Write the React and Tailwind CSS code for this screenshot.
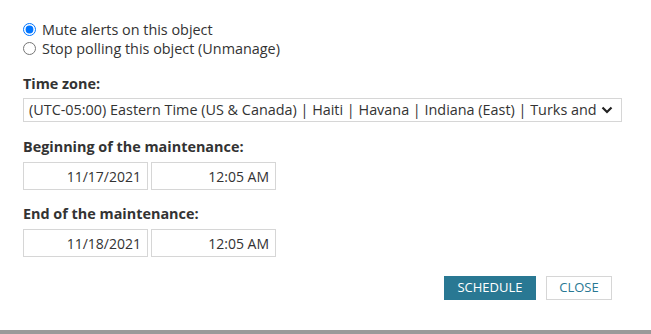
import React from "react";

const font = { fontFamily: '"Open Sans", "Liberation Sans", sans-serif' };

const Field = ({ value }) => (
    <div className="w-[125px] h-[28px] border border-[#d6d6d6] flex items-center justify-end pr-[6px] text-[14px] text-[#333]">
        {value}
    </div>
);

const Radio = ({ checked, label }) => (
    <label className="flex items-center h-[19px] leading-[19px] text-[14.4px] text-[#333]">
        <input type="radio" name="mode" defaultChecked={checked} className="m-0 w-[13px] h-[13px] mr-[6px]" />
        {label}
    </label>
);

export default function App() {
    return (
        <div className="w-[651px] h-[334px] bg-white flex flex-col" style={font}>
            <div className="flex-1 pl-[23px] pr-[29px] pt-[20px]">
                <Radio checked label="Mute alerts on this object" />
                <Radio label="Stop polling this object (Unmanage)" />

                <p className="mt-[16px] text-[14.4px] leading-[19px] font-bold text-[#333]">Time zone:</p>
                <div className="mt-[5px] h-[24px] border border-[#d6d6d6] flex items-center pl-[5px] pr-[8px] text-[14.4px] text-[#333]">
                    <span className="flex-1 whitespace-nowrap">
                        (UTC-05:00) Eastern Time (US &amp; Canada) | Haiti | Havana | Indiana (East) | Turks and
                    </span>
                    <svg width="12" height="8" viewBox="0 0 12 8" className="ml-[4px]">
                        <path d="M1.5 1.5 L6 6 L10.5 1.5" fill="none" stroke="#222" strokeWidth="2.2" />
                    </svg>
                </div>

                <p className="mt-[15px] text-[14.4px] leading-[19px] font-bold text-[#333]">Beginning of the maintenance:</p>
                <div className="mt-[6px] flex gap-[3px]">
                    <Field value="11/17/2021" />
                    <Field value="12:05 AM" />
                </div>

                <p className="mt-[14px] text-[14.4px] leading-[19px] font-bold text-[#333]">End of the maintenance:</p>
                <div className="mt-[6px] flex gap-[3px]">
                    <Field value="11/18/2021" />
                    <Field value="12:05 AM" />
                </div>

                <div className="mt-[19px] flex justify-end gap-[10px] pr-[10px]">
                    <button className="w-[92px] h-[24px] bg-[#297893] text-white text-[13px] uppercase">Schedule</button>
                    <button className="w-[66px] h-[24px] border border-[#d6d6d6] bg-white text-[#297893] text-[13px] uppercase">Close</button>
                </div>
            </div>
            <div className="h-[4px] bg-[#9a9a9a]"></div>
        </div>
    );
}
